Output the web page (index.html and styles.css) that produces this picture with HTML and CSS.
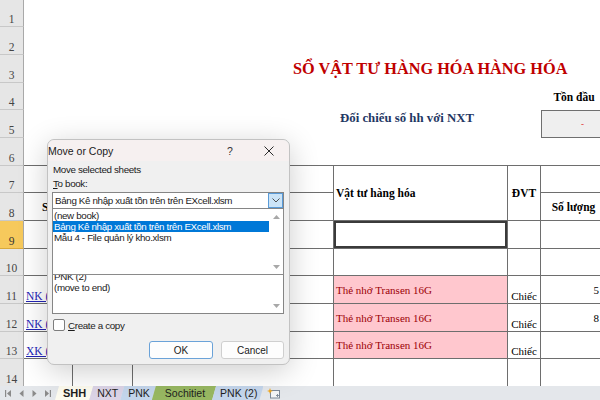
FILE: index.html
```html
<!DOCTYPE html>
<html lang="vi">
<head>
<meta charset="utf-8">
<title>SHH - Move or Copy</title>
<link rel="stylesheet" href="styles.css">
</head>
<body>
<div class="app">
  <div class="sheet">
    <div class="rh">1</div><div class="c span7"></div>
    <div class="rh">2</div><div class="c span7"></div>
    <div class="rh">3</div><div class="c span7 title-cell"><span class="title">SỔ VẬT TƯ HÀNG HÓA HÀNG HÓA</span></div>
    <div class="rh">4</div><div class="c span5"></div><div class="c hdr center">Tồn đầu</div><div class="c"></div>
    <div class="rh">5</div><div class="c span5 compare-cell"><span class="compare">Đối chiếu số hh với NXT</span></div><div class="c opening">-</div><div class="c"></div>
    <div class="rh">6</div><div class="c span7 rule"></div>

    <div class="rh">7</div>
    <div class="c t"></div><div class="c t"></div><div class="c t"></div>
    <div class="c t span-r2 hdr left">Vật tư hàng hóa</div>
    <div class="c t span-r2 hdr center">ĐVT</div>
    <div class="c t"></div><div class="c t"></div>

    <div class="rh">8</div>
    <div class="c t hdr center">Số</div><div class="c t"></div><div class="c t"></div>
    <div class="c t hdr center">Số lượng</div><div class="c t"></div>

    <div class="rh sel">9</div>
    <div class="c t"></div><div class="c t"></div><div class="c t"></div>
    <div class="c t active"></div>
    <div class="c t"></div><div class="c t"></div><div class="c t"></div>

    <div class="rh">10</div>
    <div class="c t"></div><div class="c t"></div><div class="c t"></div><div class="c t"></div><div class="c t"></div><div class="c t"></div><div class="c t"></div>

    <div class="rh">11</div>
    <div class="c t link">NK (1)</div><div class="c t"></div><div class="c t"></div>
    <div class="c t bad">Thẻ nhớ Transen 16G</div>
    <div class="c t unit">Chiếc</div>
    <div class="c t num">5</div><div class="c t"></div>

    <div class="rh">12</div>
    <div class="c t link">NK (2)</div><div class="c t"></div><div class="c t"></div>
    <div class="c t bad">Thẻ nhớ Transen 16G</div>
    <div class="c t unit">Chiếc</div>
    <div class="c t num">8</div><div class="c t"></div>

    <div class="rh">13</div>
    <div class="c t link">XK (1)</div><div class="c t"></div><div class="c t"></div>
    <div class="c t bad">Thẻ nhớ Transen 16G</div>
    <div class="c t unit">Chiếc</div>
    <div class="c t"></div><div class="c t"></div>

    <div class="rh">14</div>
    <div class="c t"></div><div class="c t"></div><div class="c t"></div><div class="c t"></div><div class="c t"></div><div class="c t"></div><div class="c t"></div>
  </div>

  <div class="tabbar">
    <div class="nav">
      <svg width="6" height="7" viewBox="0 0 6 7"><rect x="0" y="0" width="1.2" height="7" fill="#8a8a8a"/><path d="M6 0 L2 3.5 L6 7 Z" fill="#8a8a8a"/></svg>
      <svg width="5" height="7" viewBox="0 0 5 7"><path d="M4.5 0 L0.5 3.5 L4.5 7 Z" fill="#8a8a8a"/></svg>
      <svg width="5" height="7" viewBox="0 0 5 7"><path d="M0.5 0 L4.5 3.5 L0.5 7 Z" fill="#8a8a8a"/></svg>
      <svg width="6" height="7" viewBox="0 0 6 7"><path d="M0 0 L4 3.5 L0 7 Z" fill="#8a8a8a"/><rect x="4.8" y="0" width="1.2" height="7" fill="#8a8a8a"/></svg>
    </div>
    <div class="tabs">
      <div class="tab tab-active">SHH</div>
      <div class="tab tab-nxt">NXT</div>
      <div class="tab tab-pnk">PNK</div>
      <div class="tab tab-sct">Sochitiet</div>
      <div class="tab tab-pnk">PNK (2)</div>
      <div class="newsheet">
        <svg width="14" height="11" viewBox="0 0 14 11"><rect x="3.5" y="2.5" width="9" height="7.5" fill="#f4f6f8" stroke="#7d8a99"/><path d="M9 7.5 L12 7.5 M10.5 6 L10.5 9" stroke="#7d8a99" stroke-width="0.9"/><path d="M3 0 L3.8 2.2 L6 3 L3.8 3.8 L3 6 L2.2 3.8 L0 3 L2.2 2.2 Z" fill="#f2a81d"/></svg>
      </div>
    </div>
  </div>

  <div class="dialog">
    <div class="dlg-title">
      <span class="dlg-name">Move or Copy</span>
      <span class="dlg-help">?</span>
      <span class="dlg-close"><svg width="10" height="10" viewBox="0 0 10 10"><path d="M0.5 0.5 L9.5 9.5 M9.5 0.5 L0.5 9.5" stroke="#2b2b2b" stroke-width="1"/></svg></span>
    </div>
    <div class="dlg-body">
      <div class="lbl">Move selected sheets</div>
      <div class="lbl"><u>T</u>o book:</div>
      <div class="combo">
        <span class="combo-text">Bảng Kê nhập xuất tồn trên trên EXcell.xlsm</span>
        <span class="combo-btn"><svg width="8" height="5" viewBox="0 0 8 5"><path d="M0.5 0.5 L4 4 L7.5 0.5" fill="none" stroke="#404040" stroke-width="0.9"/></svg></span>
      </div>
      <div class="dropdown">
        <div class="items">
          <div class="item">(new book)</div>
          <div class="item item-sel">Bảng Kê nhập xuất tồn trên trên EXcell.xlsm</div>
          <div class="item">Mẫu 4 - File quản lý kho.xlsm</div>
        </div>
        <div class="scroll">
          <svg width="7" height="4" viewBox="0 0 7 4"><path d="M0 4 L3.5 0 L7 4 Z" fill="#a8a8a8"/></svg>
          <svg width="7" height="4" viewBox="0 0 7 4"><path d="M0 0 L3.5 4 L7 0 Z" fill="#a8a8a8"/></svg>
        </div>
      </div>
      <div class="listbox">
        <div class="items list-items">
          <div class="item">PNK (2)</div>
          <div class="item">(move to end)</div>
        </div>
        <div class="scroll scroll-end">
          <svg width="7" height="4" viewBox="0 0 7 4"><path d="M0 0 L3.5 4 L7 0 Z" fill="#a8a8a8"/></svg>
        </div>
      </div>
      <div class="check"><span class="box"></span><span><u>C</u>reate a copy</span></div>
      <div class="buttons">
        <div class="btn btn-default">OK</div>
        <div class="btn">Cancel</div>
      </div>
    </div>
  </div>
</div>
</body>
</html>
```

FILE: styles.css
```css
html, body {
  margin: 0;
  padding: 0;
  background: #ffffff;
}

.app {
  position: relative;
  width: 600px;
  height: 400px;
  overflow: hidden;
  display: flex;
  flex-direction: column;
}

/* ---------- worksheet ---------- */
.sheet {
  height: 386px;
  flex: none;
  overflow: hidden;
  display: grid;
  grid-template-columns: 24px 49px 60px 201px 174px 33px 66px 1fr;
  grid-template-rows: 27px 28px 28px 27px 28px 28px 27px 28px 28px 27px 28px 28px 27px 28px;
  font-family: "Liberation Serif", "Times New Roman", serif;
  font-size: 11px;
  color: #000;
}

.rh {
  box-sizing: border-box;
  background: #e6e6e6;
  border-right: 1px solid #a9a9a9;
  border-bottom: 1px solid #c8c8c8;
  display: flex;
  align-items: flex-end;
  justify-content: center;
  font-size: 11.5px;
  line-height: 14px;
  color: #444;
}

.rh.sel {
  background: #f6c95c;
  color: #333;
  border-bottom-color: #d9a93c;
}

.c {
  box-sizing: border-box;
  min-width: 0;
  display: flex;
  align-items: center;
  white-space: nowrap;
  overflow: hidden;
}

.span7 { grid-column: span 7; }
.span5 { grid-column: span 5; }
.span-r2 { grid-row: span 2; }

.title-cell { padding-left: 269px; }
.title {
  font-weight: bold;
  font-size: 16.3px;
  color: #c00000;
}

.compare-cell {
  align-items: flex-start;
  padding-left: 316px;
  padding-top: 1px;
}
.compare {
  font-weight: bold;
  font-size: 12.8px;
  color: #1f3864;
}

.hdr {
  font-weight: bold;
  font-size: 11.5px;
}
.center { justify-content: center; }
.left { padding-left: 2px; }

.opening {
  background: #efefef;
  border: 1px solid #6f6f6f;
  justify-content: flex-end;
  padding-right: 22px;
  color: #e02020;
  font-size: 9px;
}

.rule { border-bottom: 1px solid #6e6e6e; }

.t {
  border-right: 1px solid #6e6e6e;
  border-bottom: 1px solid #6e6e6e;
}

.active {
  box-shadow: inset 0 0 0 2px #3a3a3a;
}

.link {
  align-items: flex-end;
  padding-left: 2px;
  color: #2323b5;
  text-decoration: underline;
  font-size: 11.5px;
  line-height: 13px;
}

.bad {
  background: #ffc7ce;
  color: #9c0006;
  padding-left: 2px;
  font-size: 11px;
}

.unit {
  align-items: flex-end;
  justify-content: center;
  line-height: 13px;
}

.num {
  justify-content: flex-end;
  padding-right: 7px;
}

/* ---------- sheet tabs ---------- */
.tabbar {
  flex: 1;
  display: flex;
  align-items: stretch;
  background: #e4e7eb;
  font-family: "Liberation Sans", Arial, sans-serif;
  font-size: 10.5px;
  color: #1e1e1e;
}

.nav {
  width: 52px;
  display: flex;
  align-items: center;
  gap: 8px;
  padding-left: 5px;
  box-sizing: border-box;
}

.tabs {
  display: flex;
  align-items: stretch;
  padding-left: 3px;
}

.tab {
  display: flex;
  align-items: center;
  padding: 0 6px 0 8px;
  margin-right: -4px;
  clip-path: polygon(4px 0, 100% 0, calc(100% - 4px) 100%, 0 100%);
}

.tab-active {
  background: #fdfbef;
  font-weight: bold;
  font-size: 11px;
  padding: 0 7px 0 8px;
}
.tab-nxt { background: #dcd4e7; }
.tab-pnk { background: #c4d6ec; }
.tab-sct { background: #98b862; padding: 0 11px 0 13px; }

.newsheet {
  display: flex;
  align-items: center;
  padding-left: 8px;
}

/* ---------- dialog ---------- */
.dialog {
  position: absolute;
  left: 47px;
  top: 139px;
  width: 243px;
  height: 226px;
  box-sizing: border-box;
  border: 1px solid #c2c2c2;
  border-radius: 7px;
  background: #f0f0f0;
  box-shadow: 0 6px 30px rgba(0, 0, 0, 0.2);
  display: flex;
  flex-direction: column;
  font-family: "Liberation Sans", Arial, sans-serif;
  color: #1b1b1b;
}

.dlg-title {
  height: 21px;
  display: flex;
  align-items: center;
  padding-right: 10px;
  background: #f6f0f0;
  border-radius: 7px 7px 0 0;
  gap: 19px;
}

.dlg-name {
  flex: 1;
  font-size: 10.5px;
}

.dlg-help {
  width: 20px;
  text-align: center;
  font-size: 10.5px;
  color: #333;
}

.dlg-close {
  width: 20px;
  display: flex;
  justify-content: center;
}

.dlg-body {
  flex: 1;
  display: flex;
  flex-direction: column;
  padding: 3px 5px 5px 4px;
  font-size: 9.8px;
  letter-spacing: -0.35px;
}

.lbl {
  line-height: 12px;
  padding-left: 1px;
}
.lbl + .lbl { margin-top: 2px; }

.combo {
  margin-top: 2px;
  height: 17px;
  box-sizing: border-box;
  border: 1px solid #858585;
  background: #fff;
  display: flex;
  align-items: center;
}

.combo-text {
  flex: 1;
  padding-left: 2px;
  white-space: nowrap;
  overflow: hidden;
}

.combo-btn {
  width: 15px;
  height: 15px;
  box-sizing: border-box;
  background: #cce4f7;
  border: 1px solid #5a9bd8;
  display: flex;
  align-items: center;
  justify-content: center;
}

.dropdown {
  height: 66px;
  box-sizing: border-box;
  border: 1px solid #8a8a8a;
  border-top: none;
  background: #fff;
  display: flex;
  padding-top: 1px;
}

.items {
  flex: 1;
  min-width: 0;
  display: flex;
  flex-direction: column;
}

.item {
  line-height: 11px;
  padding-left: 1px;
  white-space: nowrap;
}

.item-sel {
  background: #0078d7;
  color: #fff;
}

.scroll {
  width: 14px;
  display: flex;
  flex-direction: column;
  align-items: center;
  justify-content: space-between;
  padding: 5px 0 5px;
}

.scroll-end { justify-content: flex-end; }

.listbox {
  height: 39px;
  box-sizing: border-box;
  border: 1px solid #858585;
  border-top: none;
  background: #fff;
  display: flex;
  overflow: hidden;
}

.list-items { margin-top: -4px; }

.check {
  margin-top: 5px;
  height: 12px;
  display: flex;
  align-items: center;
  gap: 3px;
  padding-left: 1px;
}

.box {
  width: 12px;
  height: 12px;
  box-sizing: border-box;
  border: 1px solid #7d7d7d;
  border-radius: 2px;
  background: #fff;
}

.buttons {
  margin-top: 10px;
  display: flex;
  justify-content: flex-end;
  gap: 8px;
}

.btn {
  width: 63px;
  height: 18px;
  box-sizing: border-box;
  border: 1px solid #cfcfcf;
  border-radius: 3px;
  background: #fdfdfd;
  display: flex;
  align-items: center;
  justify-content: center;
  font-size: 10px;
  letter-spacing: 0;
}

.btn-default {
  width: 64px;
  border-color: #6aa2d8;
}
```
